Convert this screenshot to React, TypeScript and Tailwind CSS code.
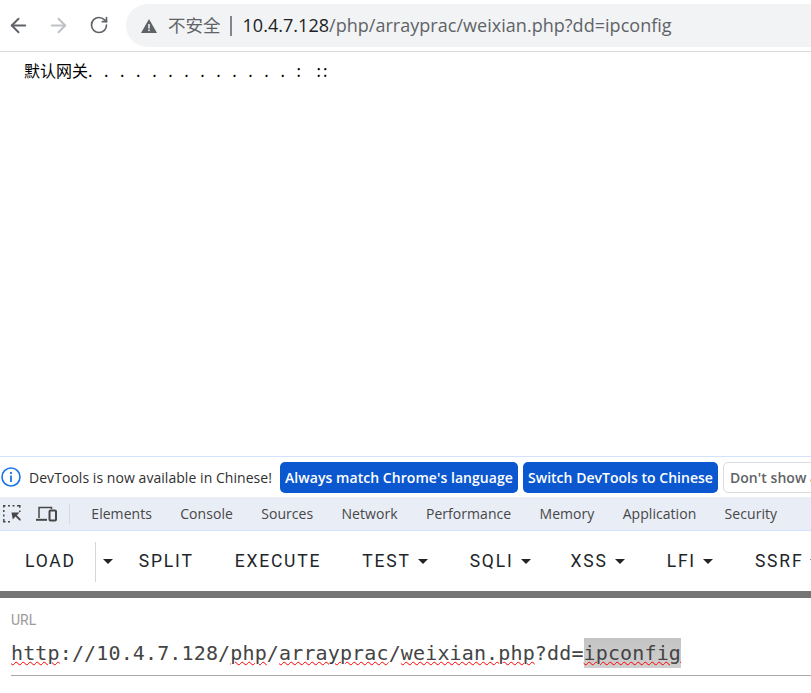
import React from 'react';
import { ArrowLeft, ArrowRight, RotateCw } from 'lucide-react';

const tabs = ['Elements', 'Console', 'Sources', 'Network', 'Performance', 'Memory', 'Application', 'Security'];

const Caret = () => (
  <svg width="10" height="5" viewBox="0 0 10 5" className="shrink-0">
    <path d="M0 0h10L5 5z" fill="#212529" />
  </svg>
);

const Wavy = ({ children }: { children: React.ReactNode }) => (
  <span className="underline decoration-wavy decoration-[#f00] decoration-1 underline-offset-[1px]">{children}</span>
);

const App: React.FC = () => {
  return (
    <div className="w-[811px] h-[693px] overflow-hidden bg-white flex flex-col font-['Roboto',sans-serif]">
      {/* Browser bar */}
      <div className="h-[52px] shrink-0 border-b border-[#dcdcdc] flex items-start">
        <div className="w-[126px] h-[51px] shrink-0 flex items-center pl-[7px] pb-[1px]">
          <ArrowLeft size={23} strokeWidth={2} className="text-[#5f6368]" />
          <ArrowRight size={23} strokeWidth={2} className="text-[#bdc1c6] ml-[17px]" />
          <RotateCw size={20} strokeWidth={2} className="text-[#5f6368] ml-[19px]" />
        </div>
        <div className="mt-[4px] h-[43px] flex-1 rounded-l-[22px] bg-[#f1f3f4] flex items-center pl-[15px] font-['Open_Sans','Noto_Sans_CJK_SC',sans-serif] text-[18px] tracking-[0.03px] text-[#5f6368] whitespace-nowrap">
          <svg width="16" height="14" viewBox="0 0 16 14" className="shrink-0">
            <path d="M8 0l8 14H0z" fill="#5f6368" />
            <rect x="7.2" y="5" width="1.6" height="4.5" fill="#f1f3f4" />
            <rect x="7.2" y="10.5" width="1.6" height="1.6" fill="#f1f3f4" />
          </svg>
          <span className="ml-[11px] font-['Noto_Sans_CJK_SC',sans-serif] text-[17.5px] tracking-normal">不安全</span>
          <span className="ml-[9px] w-[2px] h-[20px] bg-[#80868b]" />
          <span className="ml-[11px]">
            <span className="text-[#202124]">10.4.7.128</span>/php/arrayprac/weixian.php?dd=ipconfig
          </span>
        </div>
      </div>

      {/* Page body */}
      <div className="h-[404px] shrink-0 pl-[24px] pt-[7px] font-['Noto_Sans_CJK_SC',sans-serif] text-[16px] leading-[22px] text-black whitespace-pre">
        默认网关<span className="tracking-[4px]">. . . . . . . . . . . . . : </span><span className="tracking-[2px] pl-[4px]">::</span>
      </div>

      {/* DevTools language infobar */}
      <div className="h-[41px] shrink-0 border-t border-[#d3e3fd] flex items-center pl-[1px] whitespace-nowrap overflow-hidden font-['Open_Sans',sans-serif]">
        <svg width="20" height="20" viewBox="0 0 20 20" className="shrink-0">
          <circle cx="10" cy="10" r="9" fill="none" stroke="#1a73e8" strokeWidth="1.6" />
          <rect x="9.1" y="8.5" width="1.8" height="6.5" fill="#1a73e8" />
          <rect x="9.1" y="5" width="1.8" height="2" fill="#1a73e8" />
        </svg>
        <span className="ml-[8px] text-[14px] tracking-[0.05px] text-[#303030]">DevTools is now available in Chinese!</span>
        <button className="ml-[8px] h-[31px] w-[238px] shrink-0 rounded-[5px] bg-[#0b57d0] text-white text-[14px] font-semibold tracking-[0.05px]">Always match Chrome's language</button>
        <button className="ml-[5px] h-[31px] w-[195px] shrink-0 rounded-[5px] bg-[#0b57d0] text-white text-[14px] font-semibold tracking-[0.02px]">Switch DevTools to Chinese</button>
        <button className="ml-[5px] h-[31px] w-[130px] shrink-0 rounded-[5px] border border-[#dadce0] bg-white text-left pl-[6px] text-[#5f6368] text-[14px] font-semibold tracking-[0.05px]">Don't show again</button>
      </div>

      {/* DevTools tabs */}
      <div className="h-[34px] shrink-0 bg-[#e9edf6] border-b border-[#d3e3fd] flex items-center pl-[3px] gap-[28.3px] whitespace-nowrap font-['Open_Sans',sans-serif] text-[14px] tracking-[0.05px] text-[#474747]">
        <div className="flex items-center mr-[-7px]">
          <svg width="18" height="18" viewBox="0 0 18 18" className="shrink-0" fill="none" stroke="#474747">
            <path d="M0.8 2.5v-1.7h1.7M5 .8h2M9.5.8h2M14 .8h2.8v2M16.8 5.5v1.5M.8 5v2M.8 9.5v2M.8 14v2.8h1.7M5 16.8h2" strokeWidth="1.5" />
            <path d="M8.5 7.5h8l-2.7 2.7 3.8 3.8v1.5h-1.2l-3.9-3.9-2.7 2.9z" fill="#474747" stroke="none" />
          </svg>
          <svg width="22" height="18" viewBox="0 0 22 18" className="shrink-0 ml-[15px]" fill="none" stroke="#474747" strokeWidth="1.5">
            <path d="M3 13V2.5h12.5V4" />
            <path d="M0 14.8h11" strokeWidth="2" />
            <rect x="13.5" y="5.5" width="6.5" height="10" rx="1" strokeWidth="2" />
          </svg>
          <span className="ml-[11px] w-px h-[20px] bg-[#d3dbe8]" />
        </div>
        {tabs.map((t) => (
          <span key={t}>{t}</span>
        ))}
      </div>

      {/* HackBar toolbar */}
      <div className="h-[60px] shrink-0 flex items-center pt-[1px] whitespace-nowrap text-[17.5px] font-[450] tracking-[1.8px] text-[#212529]">
        <span className="ml-[25px]">LOAD</span>
        <span className="ml-[19px] w-px h-[40px] shrink-0 bg-[#d6d6d6]" />
        <span className="ml-[7px]"><Caret /></span>
        <span className="ml-[26px]">SPLIT</span>
        <span className="ml-[41px]">EXECUTE</span>
        <span className="ml-[41px] flex items-center gap-[7px]">TEST <Caret /></span>
        <span className="ml-[42px] flex items-center gap-[7px]">SQLI <Caret /></span>
        <span className="ml-[40px] flex items-center gap-[7px]">XSS <Caret /></span>
        <span className="ml-[42px] flex items-center gap-[7px]">LFI <Caret /></span>
        <span className="ml-[42px] flex items-center gap-[7px]">SSRF <Caret /></span>
      </div>

      <div className="h-[7px] shrink-0 bg-[#757575]" />

      {/* URL field */}
      <div className="flex-1 pl-[11px]">
        <div className="pt-[14px] text-[14px] leading-[16px] text-[#9a9a9a]">URL</div>
        <div className="mt-[10px] h-[38px] border-b border-[#a9a9a9] flex items-start font-['DejaVu_Sans_Mono',monospace] text-[20px] leading-[30px] tracking-[0.14px] text-[#444444] whitespace-nowrap">
          <span><Wavy>http</Wavy>://10.4.7.128/<Wavy>php</Wavy>/<Wavy>arrayprac</Wavy>/<Wavy>weixian.php</Wavy>?dd=<span className="py-[3px] bg-linear-to-b from-[#c4c4c4] to-[#cfcfcf]"><Wavy>ipconfig</Wavy></span></span>
        </div>
      </div>
    </div>
  );
};

export default App;
